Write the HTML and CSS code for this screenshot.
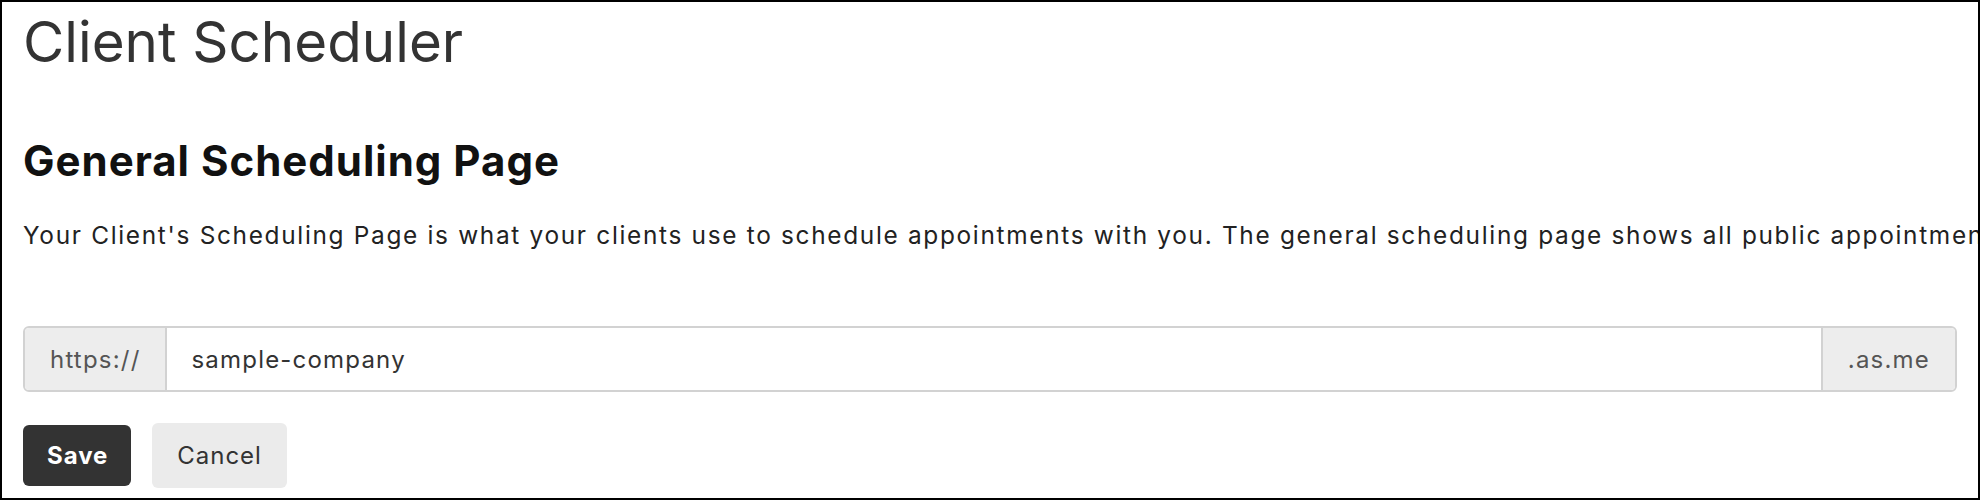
FILE: index.html
```html
<!DOCTYPE html>
<html lang="en">

<head>
    <meta charset="UTF-8">
    <meta name="viewport" content="width=device-width, initial-scale=1.0">
    <title>Client Scheduler</title>

    <link rel="stylesheet" href="styles.css">
</head>

<body>
    <div class="frame">
        <h1 class="title">Client Scheduler</h1>

        <section class="section">
            <h2 class="section-title">General Scheduling Page</h2>
            <p class="section-text">Your Client's Scheduling Page is what your clients use to schedule appointments with you. The general scheduling page shows all public appointment types and calendars.</p>

            <div class="url-group">
                <span class="url-addon">https://</span>
                <input class="url-input" type="text" value="sample-company">
                <span class="url-addon url-addon-end">.as.me</span>
            </div>

            <div class="actions">
                <button class="btn btn-primary">Save</button>
                <button class="btn btn-light">Cancel</button>
            </div>
        </section>
    </div>
</body>

</html>
```

FILE: styles.css
```css
* {
    box-sizing: border-box;
    margin: 0;
    padding: 0;
}

html,
body {
    height: 100%;
    margin: 0;
    background-color: #fff;
}

body {
    font-family: Inter, "Noto Sans", "Liberation Sans", sans-serif;
    color: #222;
}

.frame {
    height: 500px;
    border: 2px solid #000;
    padding: 8px 21px 0;
    overflow: hidden;
}

.title {
    font-size: 56.5px;
    font-weight: 400;
    line-height: 64px;
    color: #333;
}

.section {
    margin-top: 62px;
}

.section-title {
    font-size: 42px;
    font-weight: 700;
    line-height: 50px;
    letter-spacing: 1px;
    color: #111;
}

.section-text {
    margin-top: 33px;
    font-size: 24.4px;
    line-height: 32px;
    letter-spacing: 0.069em;
    white-space: nowrap;
    color: #222;
}

.url-group {
    display: flex;
    height: 66px;
    margin-top: 75px;
    border: 2px solid #d2d2d2;
    border-radius: 6px;
    overflow: hidden;
}

.url-addon {
    display: flex;
    align-items: center;
    padding: 0 25px;
    background-color: #ededed;
    font-size: 24px;
    letter-spacing: 0.05em;
    color: #555;
    border-right: 2px solid #d2d2d2;
}

.url-addon-end {
    border-right: none;
    border-left: 2px solid #d2d2d2;
}

.url-input {
    flex: 1;
    min-width: 0;
    border: none;
    outline: none;
    padding: 0 24px;
    font-family: inherit;
    font-size: 24px;
    letter-spacing: 0.05em;
    color: #333;
    background-color: #fff;
}

.actions {
    display: flex;
    align-items: center;
    gap: 21px;
    margin-top: 31px;
}

.btn {
    border: none;
    border-radius: 6px;
    font-family: inherit;
    font-size: 24px;
    letter-spacing: 0.04em;
    cursor: pointer;
}

.btn-primary {
    height: 61px;
    padding: 0 23px 0 24px;
    background-color: #333;
    color: #fff;
    font-weight: 700;
}

.btn-light {
    height: 65px;
    padding: 0 25px;
    background-color: #ebebeb;
    color: #333;
}
```
